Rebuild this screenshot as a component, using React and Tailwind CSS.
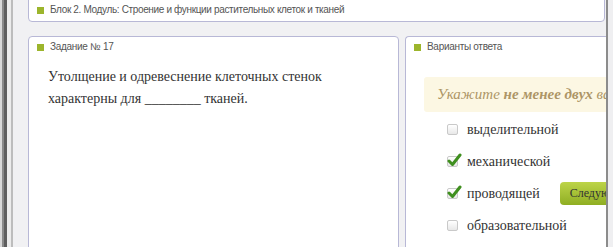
const options = [
  { label: "выделительной", checked: false },
  { label: "механической", checked: true },
  { label: "проводящей", checked: true, next: true },
  { label: "образовательной", checked: false },
];

const sans = "font-['Liberation_Sans',Arial,sans-serif]";
const serif = "font-['Liberation_Serif','Times_New_Roman',serif]";

const Marker = () => <span className="w-[7px] h-[7px] bg-[#9cb52c] shrink-0" />;

const Check = ({ checked }) => (
  <span className="relative w-[11px] h-[11px] border border-[#c9c9c9] rounded-[2px] bg-gradient-to-b from-white to-[#e8e8e8] shrink-0">
    {checked && (
      <svg className="absolute left-[-1px] top-[-4px]" width="15" height="14" viewBox="0 0 15 14">
        <path d="M2 8 L5.5 11.5 L13 2" fill="none" stroke="#3f8f1f" strokeWidth="3" strokeLinecap="round" strokeLinejoin="round" />
      </svg>
    )}
  </span>
);

export default function App() {
  return (
    <div className="w-[613px] h-[247px] flex bg-[#f1f1f3] overflow-hidden">
      {/* window edge on the left */}
      <div className="w-[13px] flex h-full shrink-0">
        <div className="w-[2px] bg-[#d8d8d8]" />
        <div className="w-[2px] bg-[#8a8a8a]" />
        <div className="w-[3px] bg-[#5e5e5e]" />
        <div className="w-[4px] bg-[#ececec]" />
        <div className="w-[2px] bg-[#bdbdbd]" />
      </div>

      <div className="w-[593px] shrink-0 pl-[15px] flex flex-col">
        <div className="-mt-[6px] h-[28px] w-[577px] shrink-0 bg-white border border-[#b8b8d6] rounded-[4px] flex items-center gap-[6px] pl-[8px] pt-[4px]">
          <Marker />
          <span className={`text-[10px] leading-[14px] text-[#555] tracking-[-0.35px] ${sans}`}>
            Блок 2. Модуль: Строение и функции растительных клеток и тканей
          </span>
        </div>

        <div className="mt-[14px] flex gap-[6px]">
          <div className="w-[371px] shrink-0 bg-white border border-[#b8b8d6] rounded-[4px] h-[230px]">
            <div className="flex items-center gap-[6px] pl-[8px] pt-[3px]">
              <Marker />
              <span className={`text-[10px] leading-[14px] text-[#555] tracking-[-0.3px] ${sans}`}>Задание № 17</span>
            </div>
            <p className={`mt-[12px] pl-[19px] pr-[20px] text-[14px] leading-[22px] text-[#333] ${serif}`}>
              Утолщение и одревеснение клеточных стенок
              <br />
              характерны для ________ тканей.
            </p>
          </div>

          {/* panel runs on past the window edge, so only its left part shows */}
          <div className="w-[201px] shrink-0 overflow-hidden bg-white border border-r-0 border-[#b8b8d6] rounded-l-[4px] h-[230px]">
            <div className="flex items-center gap-[6px] pl-[8px] pt-[3px]">
              <Marker />
              <span className={`text-[10px] leading-[14px] text-[#555] tracking-[-0.3px] ${sans}`}>Варианты ответа</span>
            </div>
            <div className={`mt-[23px] ml-[18px] w-[240px] h-[35px] bg-[#fcf7e3] rounded-[3px] flex items-center pl-[13px] whitespace-nowrap text-[15px] italic text-[#ad9566] ${serif}`}>
              Укажите&nbsp;<b>не менее двух</b>&nbsp;вариантов
            </div>
            <div className="mt-[1px] pl-[41px] flex flex-col">
              {options.map((o) => (
                <div key={o.label} className="h-[32px] flex items-center gap-[9px]">
                  <Check checked={o.checked} />
                  <span className={`text-[14px] text-[#333] whitespace-nowrap ${serif}`}>{o.label}</span>
                  {o.next && (
                    <button className={`ml-[11px] h-[23px] px-[10px] shrink-0 rounded-[4px] bg-gradient-to-b from-[#bdd448] to-[#8fae22] text-[12px] text-[#333] whitespace-nowrap ${serif}`}>
                      Следующий
                    </button>
                  )}
                </div>
              ))}
            </div>
          </div>
        </div>
      </div>

      {/* window edge on the right */}
      <div className="w-[7px] flex h-full shrink-0">
        <div className="w-[2px] bg-[#8c8c8c]" />
        <div className="w-[5px] bg-[#efeff1]" />
      </div>
    </div>
  );
}
